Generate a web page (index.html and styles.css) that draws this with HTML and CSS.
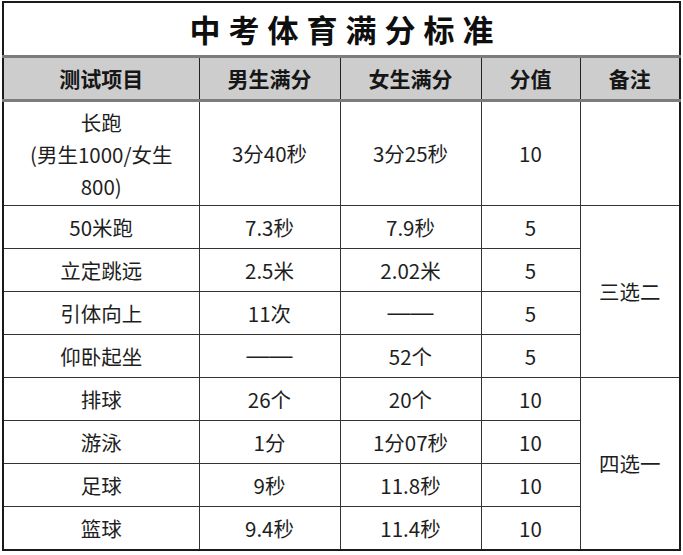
FILE: index.html
```html
<!DOCTYPE html>
<html lang="zh-CN">
<head>
<meta charset="utf-8">
<title>中考体育满分标准</title>
<link rel="stylesheet" href="styles.css">
</head>
<body>
<table class="sheet">
  <colgroup>
    <col class="c1"><col class="c2"><col class="c3"><col class="c4"><col class="c5">
  </colgroup>
  <thead>
    <tr class="title-row"><th colspan="5" class="title">中考体育满分标准</th></tr>
    <tr class="head-row">
      <th>测试项目</th><th>男生满分</th><th>女生满分</th><th>分值</th><th>备注</th>
    </tr>
  </thead>
  <tbody>
    <tr class="tall">
      <td class="multi">长跑<br>(男生1000/女生<br>800)</td><td>3分40秒</td><td>3分25秒</td><td>10</td><td></td>
    </tr>
    <tr><td>50米跑</td><td>7.3秒</td><td>7.9秒</td><td>5</td><td rowspan="4">三选二</td></tr>
    <tr><td>立定跳远</td><td>2.5米</td><td>2.02米</td><td>5</td></tr>
    <tr><td>引体向上</td><td>11次</td><td><span class="dash">——</span></td><td>5</td></tr>
    <tr><td>仰卧起坐</td><td><span class="dash">——</span></td><td>52个</td><td>5</td></tr>
    <tr><td>排球</td><td>26个</td><td>20个</td><td>10</td><td rowspan="4">四选一</td></tr>
    <tr><td>游泳</td><td>1分</td><td>1分07秒</td><td>10</td></tr>
    <tr><td>足球</td><td>9秒</td><td>11.8秒</td><td>10</td></tr>
    <tr><td>篮球</td><td>9.4秒</td><td>11.4秒</td><td>10</td></tr>
  </tbody>
</table>
</body>
</html>
```
FILE: styles.css
```css
html, body {
  margin: 0;
  padding: 0;
  background: #ffffff;
}
body {
  padding: 1px 0 0 2px;
  font-family: "Noto Sans CJK SC", "Noto Sans", sans-serif;
  color: #1e1e1e;
}
.sheet {
  border-collapse: collapse;
  table-layout: fixed;
  width: 677px;
  border: 2px solid #1a1a1a;
}
.c1 { width: 196px; }
.c2 { width: 141px; }
.c3 { width: 141px; }
.c4 { width: 99px; }
.c5 { width: 100px; }
th, td {
  text-align: center;
  vertical-align: middle;
  padding: 0;
  font-size: 20.5px;
  line-height: 1.3;
}
.title-row th {
  height: 52px;
  font-size: 31px;
  font-weight: 700;
  letter-spacing: 8px;
  padding-left: 8px;
  color: #0e0e0e;
  border-bottom: 3px solid #7c7c7c;
}
.head-row th {
  height: 41px;
  background: #cdcdcd;
  font-size: 21px;
  font-weight: 700;
  color: #161616;
  border-left: 1px solid #222222;
  border-right: 1px solid #222222;
  border-bottom: 3px solid #7c7c7c;
}
td {
  height: 42px;
  border: 1px solid #333333;
  font-weight: 400;
}
.tall td { height: 103px; }
.multi { line-height: 32px; }
.dash {
  font-family: "Liberation Sans", sans-serif;
  font-size: 23px;
}
```
